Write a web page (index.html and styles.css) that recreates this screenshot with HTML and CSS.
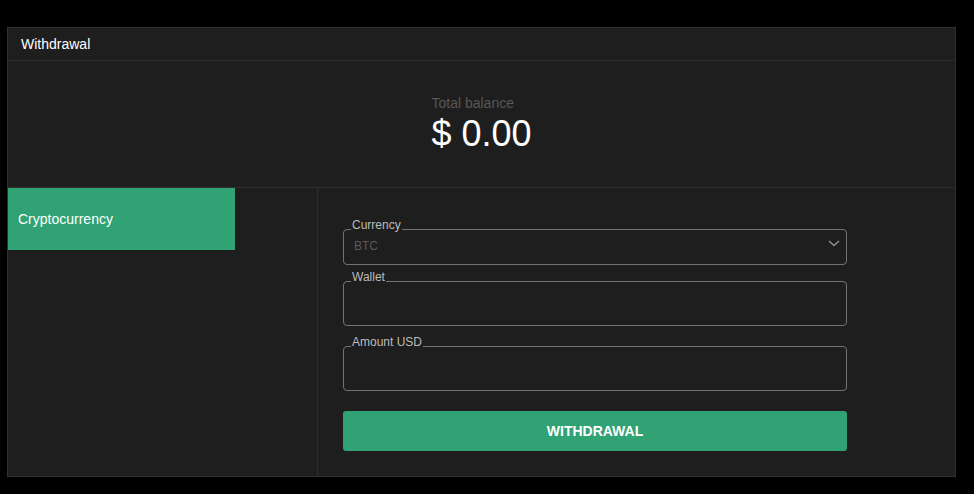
FILE: index.html
```html
<!DOCTYPE html>
<html lang="en">
<head>
<meta charset="utf-8">
<title>Withdrawal</title>
<link rel="stylesheet" href="styles.css">
</head>
<body>
<div class="panel">
  <div class="panel-header">Withdrawal</div>
  <div class="balance">
    <div class="balance-inner">
      <div class="balance-label">Total balance</div>
      <div class="balance-value">$ 0.00</div>
    </div>
  </div>
  <div class="body-row">
    <div class="sidebar">
      <div class="tab active">Cryptocurrency</div>
    </div>
    <div class="content">
      <form class="form">
        <fieldset class="field field-select">
          <legend>Currency</legend>
          <div class="field-inner select-inner">
            <span class="select-value">BTC</span>
            <svg class="chevron" width="12" height="7" viewBox="0 0 12 7"><path d="M1 1 L6 5.5 L11 1" fill="none" stroke="#8b9099" stroke-width="1.5"/></svg>
          </div>
        </fieldset>
        <fieldset class="field field-wallet">
          <legend>Wallet</legend>
          <div class="field-inner tall"></div>
        </fieldset>
        <fieldset class="field field-amount">
          <legend>Amount USD</legend>
          <div class="field-inner tall"></div>
        </fieldset>
        <button type="button" class="submit">WITHDRAWAL</button>
      </form>
    </div>
  </div>
</div>
</body>
</html>
```
FILE: styles.css
```css
* { box-sizing: border-box; }
html, body {
  margin: 0;
  padding: 0;
  background: #000;
  font-family: "Liberation Sans", Arial, sans-serif;
  color: #fff;
}
.panel {
  margin: 27px 0 0 7px;
  width: 949px;
  background: #1e1e1e;
  border: 1px solid #303030;
}
.panel-header {
  padding: 8px 13px;
  font-size: 14px;
  line-height: 16px;
  border-bottom: 1px solid #303030;
}
.balance {
  display: flex;
  justify-content: center;
  padding: 34px 0 32px;
  border-bottom: 1px solid #303030;
}
.balance-label {
  font-size: 14px;
  line-height: 16px;
  color: #575757;
  margin-bottom: 2px;
}
.balance-value {
  font-size: 36px;
  line-height: 42px;
  color: #fff;
}
.body-row {
  display: flex;
}
.sidebar {
  width: 310px;
  border-right: 1px solid #2c2c2c;
}
.tab {
  width: 227px;
  height: 62px;
  display: flex;
  align-items: center;
  padding-left: 10px;
  font-size: 14px;
}
.tab.active {
  background: #31a273;
}
.content {
  flex: 1;
  padding: 31px 0 25px 25px;
}
.form {
  width: 504px;
  display: flex;
  flex-direction: column;
}
.field {
  margin: 0;
  padding: 0 6px 0 9px;
  border: 1px solid #727272;
  border-radius: 4px;
  min-width: 0;
}
.field legend {
  margin-left: -2px;
  padding: 0 1px 8px;
  font-size: 12px;
  line-height: 13px;
  color: #bcbcbc;
}
.field-inner {
  height: 24px;
}
.field-inner.tall {
  height: 33px;
}
.select-inner {
  display: flex;
  justify-content: space-between;
  align-items: flex-start;
}
.select-value {
  font-size: 12px;
  line-height: 12px;
  color: #5a5a5a;
  padding-left: 1px;
}
.chevron {
  display: block;
  margin-top: 0;
}
.field-wallet { margin-top: 6px; }
.field-amount { margin-top: 10px; }
.submit {
  margin-top: 20px;
  height: 40px;
  border: none;
  border-radius: 3px;
  background: #31a273;
  color: #fff;
  font-family: "Liberation Sans", Arial, sans-serif;
  font-weight: bold;
  font-size: 14px;
  padding: 0;
}
```
